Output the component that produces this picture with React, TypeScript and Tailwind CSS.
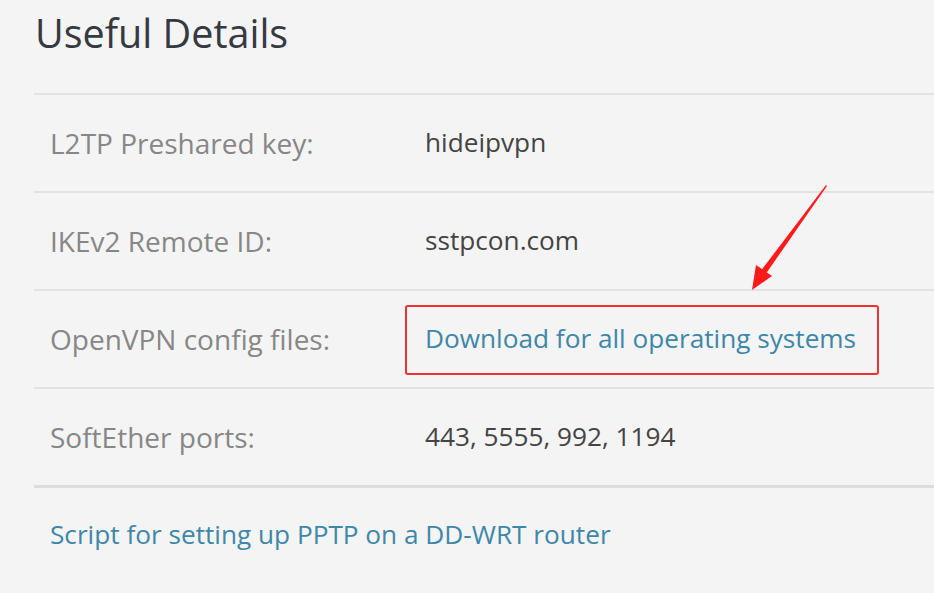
import React from 'react';

const rows = [
  { label: 'L2TP Preshared key:', value: 'hideipvpn' },
  { label: 'IKEv2 Remote ID:', value: 'sstpcon.com' },
  { label: 'OpenVPN config files:', value: 'Download for all operating systems', link: true },
  { label: 'SoftEther ports:', value: '443, 5555, 992, 1194' },
];

function App() {
  return (
    <div
      className="relative h-[593px] w-[934px] overflow-hidden bg-[#f4f4f4] pl-[34px]"
      style={{ fontFamily: '"Open Sans", "Noto Sans", sans-serif' }}
    >
      {/* Heading */}
      <div className="flex h-[93px] items-start pl-[1px] pt-[7px]">
        <h2 className="text-[39.5px] leading-[52px] text-[#353a42]">Useful Details</h2>
      </div>

      {/* Detail rows */}
      <div>
        {rows.map((r) => (
          <div key={r.label} className="flex h-[98px] items-center border-t-2 border-[#e2e2e2] pl-[16px]">
            <div className="w-[375px] text-[28px] text-[#878787]">{r.label}</div>
            <div className={r.link ? 'text-[26.2px] text-[#3e87a9]' : 'text-[26.2px] text-[#444444]'}>
              {r.value}
            </div>
          </div>
        ))}
      </div>

      <div className="flex h-[96px] items-center border-t-[3px] border-[#dcdcdc] pl-[16px]">
        <span className="text-[26.2px] text-[#3e87a9]">Script for setting up PPTP on a DD-WRT router</span>
      </div>

      {/* Annotation: red box round the download link */}
      <div className="pointer-events-none absolute left-[405px] top-[305px] h-[70px] w-[474px] rounded-[3px] border-2 border-[#f23030]" />

      {/* Annotation: arrow */}
      <svg className="pointer-events-none absolute left-[740px] top-[180px]" width="100" height="115" viewBox="0 0 100 115">
        <polygon points="86,5 87,6 25,95 20,92" fill="#ff1a1a" />
        <polygon points="12,110 16,85 32,96" fill="#ff1a1a" />
      </svg>
    </div>
  );
}

export default App;
